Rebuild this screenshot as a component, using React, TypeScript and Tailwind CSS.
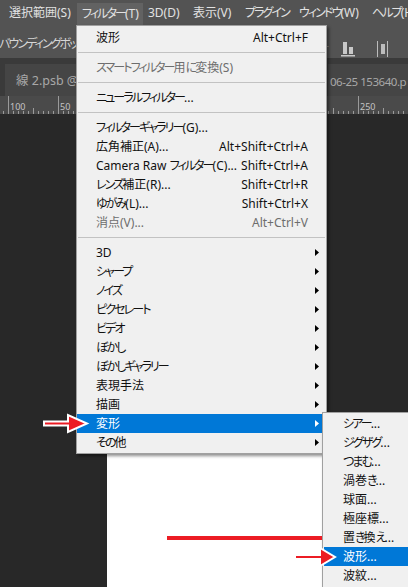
import React from "react";

const FONT =
  "font-['Noto_Sans','Noto_Sans_CJK_JP',sans-serif] [font-feature-settings:'palt']";

// かな部分だけ字詰めする（元のUIフォントはかなが狭い）
const jp = (s: string) =>
  s.split(/([\u3040-\u30ff]+)/).map((part, i) =>
    /[\u3040-\u30ff]/.test(part) ? (
      <span key={i} className="tracking-[-0.16em]">
        {part}
      </span>
    ) : (
      part
    )
  );

interface ItemProps {
  label: string;
  shortcut?: string;
  sub?: boolean;
  disabled?: boolean;
  active?: boolean;
}

const SubArrow: React.FC<{ white?: boolean }> = ({ white }) => (
  <svg width="4" height="7" viewBox="0 0 4 7">
    <polygon points="0,0 4,3.5 0,7" fill={white ? "#ffffff" : "#000000"} />
  </svg>
);

const MenuItem: React.FC<ItemProps> = ({ label, shortcut, sub, disabled, active }) => {
  const color = active
    ? "bg-[#0078d7] text-white"
    : disabled
    ? "text-[#6d6d6d]"
    : "text-[#111111]";
  return (
    <div className={`flex items-center h-[19px] pl-[19px] text-[12px] whitespace-nowrap ${color}`}>
      <span className="flex-1">{jp(label)}</span>
      {shortcut && <span>{shortcut}</span>}
      <span className="w-[18px] flex justify-end pr-[7px]">
        {sub && <SubArrow white={active} />}
      </span>
    </div>
  );
};

const Separator = () => (
  <div className="h-[11px] pt-[5px] px-[1px]">
    <div className="h-px bg-[#c2c2c2]" />
  </div>
);

const Ruler = () => {
  const majors = [
    { x: 8, n: "100" },
    { x: 58, n: "50" },
    { x: 108, n: "0" },
    { x: 158, n: "50" },
    { x: 208, n: "100" },
    { x: 258, n: "150" },
    { x: 308, n: "200" },
    { x: 358, n: "250" },
  ];
  const minors: number[] = [];
  for (let x = 3; x < 408; x += 5) minors.push(x);
  return (
    <svg width="408" height="18" viewBox="0 0 408 18" className="block">
      {minors.map((x) => (
        <line
          key={x}
          x1={x + 0.5}
          x2={x + 0.5}
          y1={(x - 8) % 25 === 0 ? 12 : 15}
          y2={18}
          stroke="#9a9a9a"
          strokeWidth="1"
        />
      ))}
      {majors.map((m) => (
        <g key={m.x}>
          <line x1={m.x + 0.5} x2={m.x + 0.5} y1={0} y2={18} stroke="#9a9a9a" strokeWidth="1" />
          <text x={m.x + 2} y={14} fontSize="9" fill="#c4c4c4" fontFamily="Noto Sans, sans-serif">
            {m.n}
          </text>
        </g>
      ))}
    </svg>
  );
};

const App: React.FC = () => {
  return (
    <div className={`relative w-[408px] h-[587px] overflow-hidden bg-[#282828] ${FONT}`}>
      {/* メニューバー */}
      <div className="flex h-[25px] bg-[#535353] pl-[4px] text-[12px] text-[#e2e2e2] whitespace-nowrap">
        <div className="shrink-0 w-[73px] pl-[5px] flex items-center">{jp("選択範囲(S)")}</div>
        <div className="shrink-0 w-[66px] pl-[5px] mt-[3px] flex items-center bg-[#626262]">{jp("フィルター(T)")}</div>
        <div className="shrink-0 w-[45px] pl-[5px] flex items-center">3D(D)</div>
        <div className="shrink-0 w-[52px] pl-[5px] flex items-center">{jp("表示(V)")}</div>
        <div className="shrink-0 w-[54px] pl-[5px] flex items-center">{jp("プラグイン")}</div>
        <div className="shrink-0 w-[73px] pl-[5px] flex items-center">{jp("ウィンドウ(W)")}</div>
        <div className="shrink-0 pl-[5px] flex items-center">{jp("ヘルプ(H)")}</div>
      </div>

      {/* オプションバー */}
      <div className="flex items-start h-[33px] bg-[#535353] text-[12px] text-[#d6d6d6] whitespace-nowrap">
        <span className="ml-[-1px] mt-[13px] leading-none">{jp("バウンディングボックスを表示")}</span>
        <div className="ml-auto flex items-start">
          <span className="mt-[16px] text-[#8a8a8a] leading-none">+</span>
          <svg width="16" height="18" viewBox="0 0 16 18" className="ml-[12px] mt-[16px]">
            <rect x="2" y="1" width="4" height="12" fill="#c8c8c8" />
            <rect x="8" y="6" width="4" height="7" fill="#c8c8c8" />
            <rect x="0" y="14" width="14" height="1.5" fill="#c8c8c8" />
          </svg>
          <svg width="14" height="18" viewBox="0 0 14 18" className="ml-[20px] mt-[15px] mr-[17px]">
            <rect x="0" y="1" width="1" height="16" fill="#bcbcbc" />
            <rect x="4" y="4" width="4" height="10" fill="#bcbcbc" />
            <rect x="10" y="1" width="1" height="16" fill="#bcbcbc" />
          </svg>
        </div>
      </div>

      {/* タブ */}
      <div className="h-[6px] bg-[#3a3a3a]" />
      <div className="flex h-[32px] bg-[#3a3a3a] text-[12.5px] text-[#a8a8a8] whitespace-nowrap">
        <div className="ml-[5px] w-[200px] bg-[#454545] pl-[11px] pt-[8px]">線 2.psb @ 66.7% (RGB/8)</div>
        <div className="ml-auto w-[80px] bg-[#454545] pl-[2px] pt-[9px] overflow-hidden text-[11.5px] tracking-[-0.04em]">
          06-25 153640.p
        </div>
      </div>

      {/* 定規 */}
      <div className="h-[18px] bg-[#4a4a4a]">
        <Ruler />
      </div>

      {/* キャンバス */}
      <div className="h-[473px] pl-[107px] pt-[316px]">
        <div className="h-full bg-white" />
      </div>

      {/* フィルターメニュー */}
      <div className="absolute left-[76px] top-[25px] w-[251px] bg-[#f0f0f0] border border-[#a0a0a0] pt-[2px] pb-[1px] shadow-[2px_2px_3px_rgba(0,0,0,0.45)]">
        <MenuItem label="波形" shortcut="Alt+Ctrl+F" />
        <Separator />
        <MenuItem label="スマートフィルター用に変換(S)" disabled />
        <Separator />
        <MenuItem label="ニューラルフィルター..." />
        <Separator />
        <MenuItem label="フィルターギャラリー(G)..." />
        <MenuItem label="広角補正(A)..." shortcut="Alt+Shift+Ctrl+A" />
        <MenuItem label="Camera Raw フィルター(C)..." shortcut="Shift+Ctrl+A" />
        <MenuItem label="レンズ補正(R)..." shortcut="Shift+Ctrl+R" />
        <MenuItem label="ゆがみ(L)..." shortcut="Shift+Ctrl+X" />
        <MenuItem label="消点(V)..." shortcut="Alt+Ctrl+V" disabled />
        <Separator />
        <MenuItem label="3D" sub />
        <MenuItem label="シャープ" sub />
        <MenuItem label="ノイズ" sub />
        <MenuItem label="ピクセレート" sub />
        <MenuItem label="ビデオ" sub />
        <MenuItem label="ぼかし" sub />
        <MenuItem label="ぼかしギャラリー" sub />
        <MenuItem label="表現手法" sub />
        <MenuItem label="描画" sub />
        <MenuItem label="変形" sub active />
        <MenuItem label="その他" sub />
      </div>

      {/* 変形サブメニュー */}
      <div className="absolute left-[322px] top-[412px] w-[110px] h-[200px] bg-[#f0f0f0] border border-[#a0a0a0] pt-[1px] pl-[1px] shadow-[2px_2px_3px_rgba(0,0,0,0.45)]">
        {["シアー...", "ジグザグ...", "つまむ...", "渦巻き...", "球面...", "極座標...", "置き換え...", "波形...", "波紋..."].map(
          (label) => (
            <MenuItem key={label} label={label} active={label === "波形..."} />
          )
        )}
      </div>

      {/* 注釈の赤い矢印と線 */}
      <svg width="52" height="24" viewBox="0 0 52 24" className="absolute left-[40px] top-[412px]">
        <path d="M4,9.5 H28 V3 L47,11.5 L28,20 V13.5 H4 Z" fill="#ec1c24" stroke="#ffffff" strokeWidth="2" strokeLinejoin="miter" />
      </svg>
      <div className="absolute left-[167px] top-[536px] w-[155px] h-[4px] bg-[#ec1c24]" />
      <svg width="50" height="26" viewBox="0 0 50 26" className="absolute left-[290px] top-[544px]">
        <path d="M5,11 H30 V4 L45,13 L30,22 V15 H5 Z" fill="#ec1c24" stroke="#ffffff" strokeWidth="2" strokeLinejoin="miter" />
      </svg>
    </div>
  );
};

export default App;
